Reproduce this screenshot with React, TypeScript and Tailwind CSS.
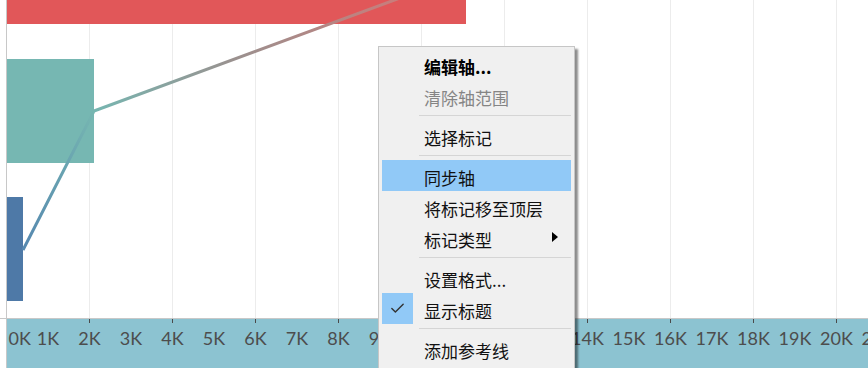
import { Check } from 'lucide-react';

const gridXs = [89, 172, 255, 338, 421, 504, 587, 670, 753, 836];
const labels = Array.from({ length: 21 }, (_, i) => `${i + 1}K`);

type MenuEntry =
  | { kind: 'item'; label: string; bold?: boolean; disabled?: boolean; active?: boolean; checked?: boolean; submenu?: boolean }
  | { kind: 'sep' };

const menu: MenuEntry[] = [
  { kind: 'item', label: '编辑轴...', bold: true },
  { kind: 'item', label: '清除轴范围', disabled: true },
  { kind: 'sep' },
  { kind: 'item', label: '选择标记' },
  { kind: 'sep' },
  { kind: 'item', label: '同步轴', active: true },
  { kind: 'item', label: '将标记移至顶层' },
  { kind: 'item', label: '标记类型', submenu: true },
  { kind: 'sep' },
  { kind: 'item', label: '设置格式...' },
  { kind: 'item', label: '显示标题', checked: true },
  { kind: 'sep' },
  { kind: 'item', label: '添加参考线' },
];

const Plot = () => (
  <svg width={868} height={318} className="block" shapeRendering="crispEdges">
    <defs>
      <linearGradient id="lineGrad" gradientUnits="userSpaceOnUse" x1="23" y1="250" x2="400" y2="0">
        <stop offset="0" stopColor="#5688b0" />
        <stop offset="0.3" stopColor="#76b6b1" />
        <stop offset="0.62" stopColor="#9a918f" />
        <stop offset="1" stopColor="#c97d7b" />
      </linearGradient>
    </defs>
    {gridXs.map((x) => (
      <rect key={x} x={x} y={0} width={1} height={318} fill="#ececec" />
    ))}
    <rect x={6} y={0} width={1} height={318} fill="#c8c8c8" />
    <rect x={7} y={0} width={459} height={24} fill="#e15759" />
    <rect x={7} y={59} width={87} height={104} fill="#76b7b2" />
    <rect x={7} y={197} width={16} height={104} fill="#4e79a7" />
    <polyline
      points="23,250 94,111 400,-2"
      fill="none"
      stroke="url(#lineGrad)"
      strokeWidth={3}
      strokeLinejoin="round"
      shapeRendering="auto"
    />
  </svg>
);

const AxisBand = () => (
  <div className="flex h-[50px]">
    <div className="w-[6px] shrink-0 border-t border-[#c8c8c8] bg-white" />
    <div className="w-px shrink-0 bg-[#c8c8c8]" />
    <div className="relative min-w-0 flex-1 overflow-hidden border-t border-[#c8c8c8] bg-[#8cc3d1]">
      <div className="absolute left-[82px] top-0 flex gap-[82px]">
        {gridXs.map((x) => (
          <div key={x} className="h-[4px] w-px shrink-0 bg-[#4a4a4a]" />
        ))}
      </div>
      <div className="flex pt-[7px] font-['Lato',sans-serif] text-[18px] leading-[24px] text-[#4d4d4d] whitespace-nowrap">
        <div className="w-[20.25px] shrink-0 pl-[1.5px]">0K</div>
        {labels.map((l) => (
          <div key={l} className="w-[41.5px] shrink-0 text-center">
            {l}
          </div>
        ))}
      </div>
    </div>
  </div>
);

const ContextMenu = () => (
  <div className="absolute left-[378px] top-[46px] w-[197px] border border-[#c6c6c6] bg-[#f0f0f0] px-[3px] pt-[2px] pb-[20px] font-['Noto_Sans_CJK_SC','Noto_Sans',sans-serif] text-[17px] shadow-[3px_3px_2px_rgba(0,0,0,0.45)]">
    {menu.map((m, i) =>
      m.kind === 'sep' ? (
        <div key={i} className="flex h-[9px] items-center pl-[37px]">
          <div className="h-px w-full bg-[#d5d5d5]" />
        </div>
      ) : (
        <div
          key={i}
          className={`relative flex h-[31px] items-center pl-[42px] pt-[3px] leading-none ${m.active ? 'bg-[#91c9f7]' : ''} ${
            m.bold ? 'font-bold text-black' : m.disabled ? 'text-[#858585]' : 'text-[#111]'
          }`}
        >
          {m.checked && (
            <div className="absolute left-0 top-0 flex h-[31px] w-[31px] items-center justify-center bg-[#91c9f7]">
              <Check className="h-[17px] w-[17px] text-[#333]" strokeWidth={2} />
            </div>
          )}
          {m.label}
          {m.submenu && (
            <div className="absolute right-[13px] top-[10px] h-0 w-0 border-y-[5px] border-l-[6px] border-y-transparent border-l-black" />
          )}
        </div>
      ),
    )}
  </div>
);

export default function App() {
  return (
    <div className="relative h-[368px] w-[868px] overflow-hidden bg-white">
      <Plot />
      <AxisBand />
      <ContextMenu />
    </div>
  );
}
